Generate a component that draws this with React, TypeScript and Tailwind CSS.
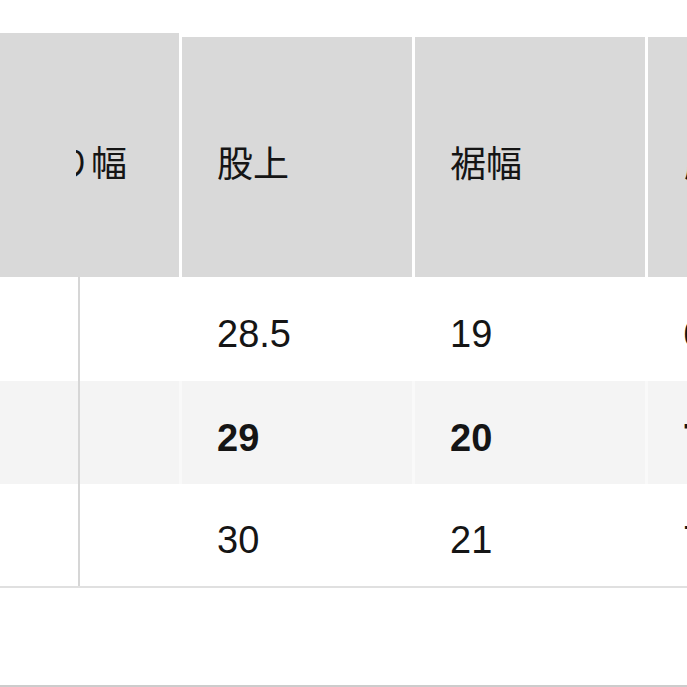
import React from 'react';

const cjk = { fontFamily: '"Noto Sans CJK JP", "Noto Sans", sans-serif' };
const num = { fontFamily: '"Liberation Sans", Arial, sans-serif' };

type Row = { values: string[]; bold?: boolean; shaded?: boolean };

const rows: Row[] = [
  { values: ['28.5', '19', '69'] },
  { values: ['29', '20', '71'], bold: true, shaded: true },
  { values: ['30', '21', '73'] },
];

function BodyRow({ row, height }: { row: Row; height: string }) {
  const cell = row.shaded ? 'bg-[#f4f4f4]' : 'bg-white';
  const gap = row.shaded ? 'bg-[#f9f9f9]' : 'bg-white';
  return (
    <div className={`flex ${height}`}>
      <div className={`w-[78px] shrink-0 ${cell}`} />
      <div className="w-[2px] shrink-0 bg-[#d6d6d6]" />
      <div className={`w-[99px] shrink-0 ${cell}`} />
      <div className={`w-[3px] shrink-0 ${gap}`} />
      {row.values.map((v, i) => (
        <React.Fragment key={i}>
          <div
            className={`${i < 2 ? 'w-[230px] shrink-0' : 'flex-1'} ${cell} flex items-center pl-[35px] pt-[10px] text-[38px] leading-none text-[#151515] whitespace-nowrap overflow-hidden ${row.bold ? 'font-bold' : 'font-normal'}`}
            style={num}
          >
            {v}
          </div>
          {i < 2 && <div className={`w-[3px] shrink-0 ${gap}`} />}
        </React.Fragment>
      ))}
    </div>
  );
}

export default function App() {
  return (
    <div className="w-[687px] h-[687px] bg-white overflow-hidden flex flex-col">
      <div className="h-[33px] shrink-0" />

      {/* header */}
      <div className="flex h-[244px] shrink-0 text-[36px] leading-none text-[#151515]" style={cjk}>
        <div className="w-[179px] shrink-0 bg-[#d9d9d9] flex items-center justify-end pr-[52px] pt-[12px]">
          <div className="w-[51px] overflow-hidden flex justify-end whitespace-nowrap">
            <span>わたり幅</span>
          </div>
        </div>
        <div className="w-[3px] shrink-0 bg-white mt-[4px]" />
        <div className="w-[230px] shrink-0 bg-[#d9d9d9] mt-[4px] flex items-center pl-[35px] pt-[8px]">
          股上
        </div>
        <div className="w-[3px] shrink-0 bg-white mt-[4px]" />
        <div className="w-[230px] shrink-0 bg-[#d9d9d9] mt-[4px] flex items-center pl-[35px] pt-[8px]">
          裾幅
        </div>
        <div className="w-[3px] shrink-0 bg-white mt-[4px]" />
        <div className="flex-1 bg-[#d9d9d9] mt-[4px] flex items-center pl-[36px] pt-[8px] whitespace-nowrap overflow-hidden">
          股下
        </div>
      </div>

      {/* body */}
      <BodyRow row={rows[0]} height="h-[104px]" />
      <BodyRow row={rows[1]} height="h-[103px]" />
      <BodyRow row={rows[2]} height="h-[102px]" />
      <div className="h-[2px] shrink-0 bg-[#e0e0e0]" />

      <div className="flex-1" />
      <div className="h-[2px] shrink-0 bg-[#cccccc]" />
    </div>
  );
}
